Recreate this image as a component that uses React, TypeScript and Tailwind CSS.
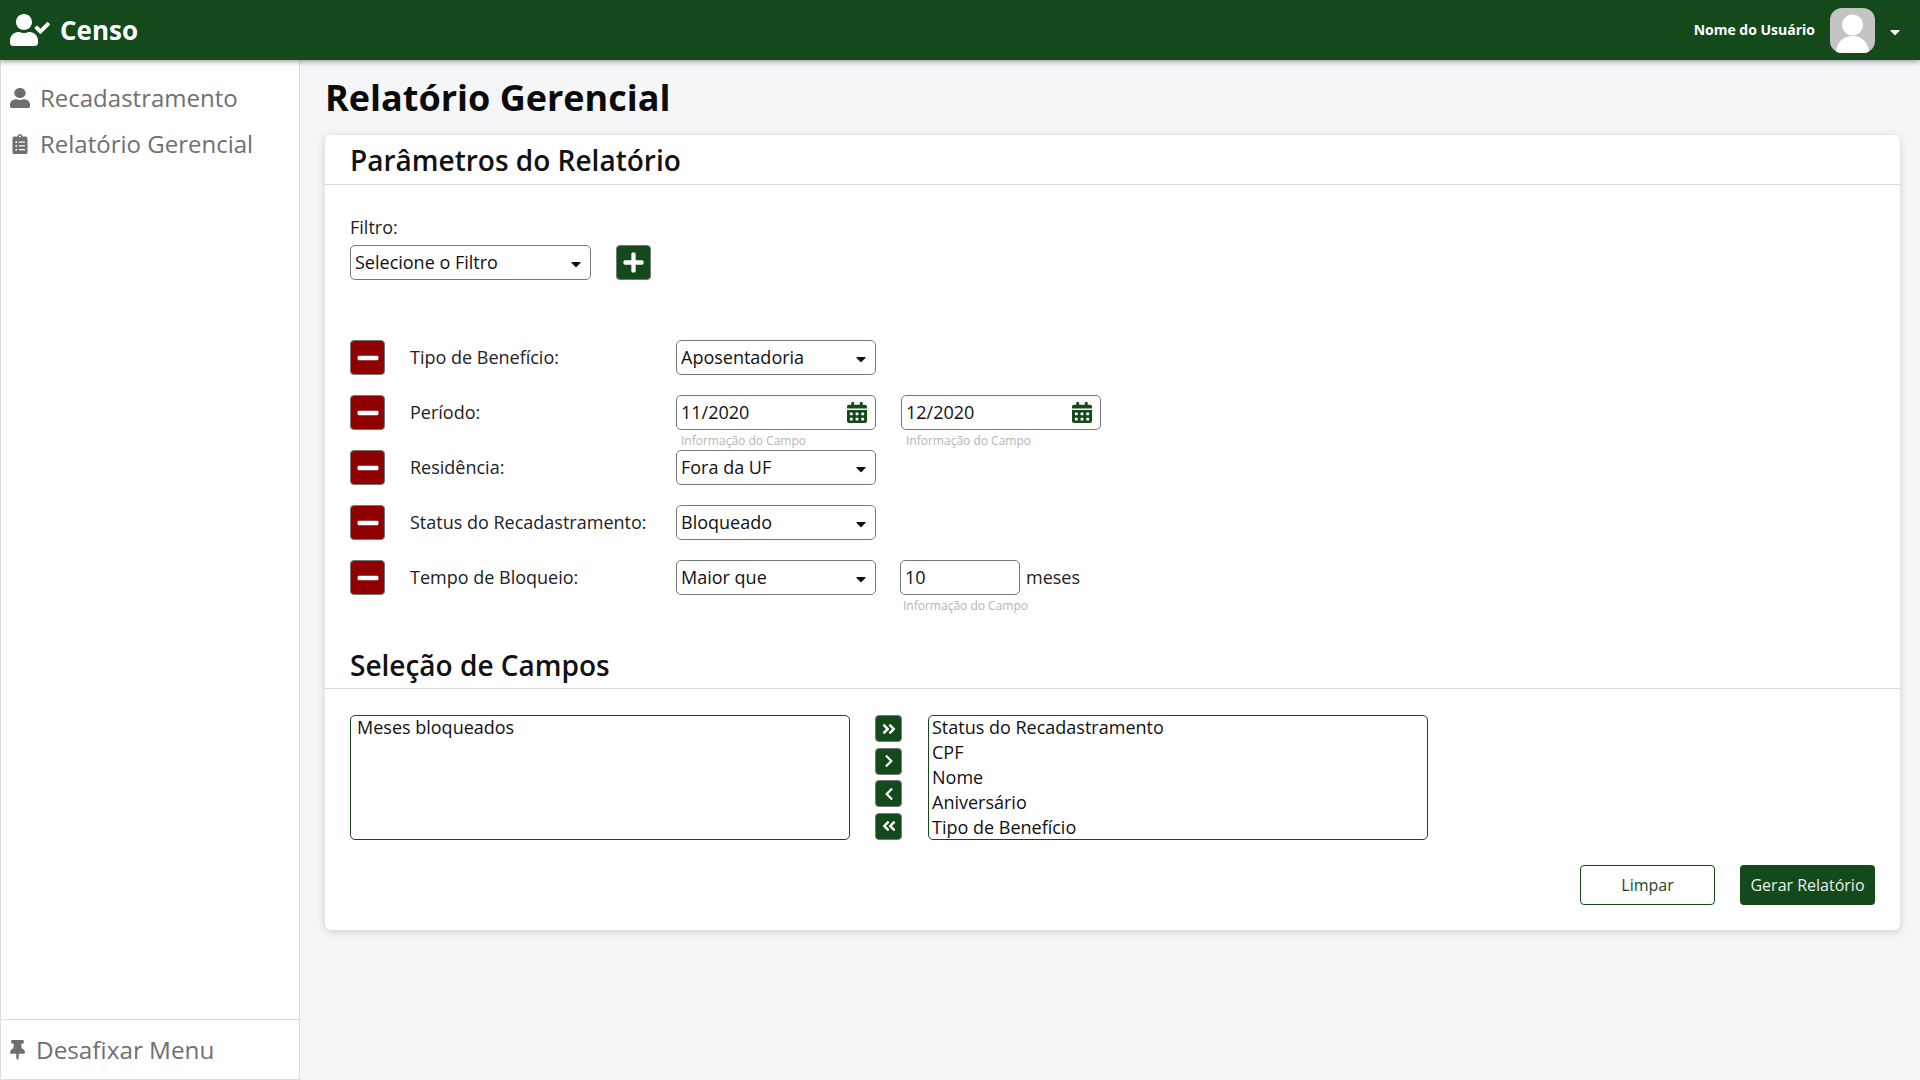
import React from 'react';
import {
  FaUserCheck,
  FaUser,
  FaClipboardList,
  FaThumbtack,
  FaCalendarAlt,
  FaPlus,
  FaMinus,
  FaAngleDoubleRight,
  FaChevronRight,
  FaChevronLeft,
  FaAngleDoubleLeft,
  FaCaretDown,
} from 'react-icons/fa';

const SelectBox: React.FC<{ value: string; className?: string }> = ({ value, className }) => (
  <div className={`flex h-[35px] items-center justify-between rounded-[5px] border border-[#777] bg-white pl-[4px] pr-[6px] text-[18px] text-[#111] ${className ?? 'w-[200px]'}`}>
    <span>{value}</span>
    <FaCaretDown className="mt-[3px] h-[16px] w-[16px] text-[#111]" />
  </div>
);

const Hint: React.FC<{ className?: string }> = ({ className }) => (
  <p className={`text-[12px] leading-[16px] text-[#b5b5b5] ${className ?? ''}`}>Informação do Campo</p>
);

const DateBox: React.FC<{ value: string }> = ({ value }) => (
  <div>
    <div className="flex h-[35px] w-[200px] items-center justify-between rounded-[5px] border border-[#777] bg-white pl-[4px] pr-[8px] text-[18px] text-[#111]">
      <span>{value}</span>
      <FaCalendarAlt preserveAspectRatio="none" className="h-[21px] w-[20px] text-[#14491c]" />
    </div>
    <Hint className="mt-[3px] pl-[5px]" />
  </div>
);

const Row: React.FC<{ label: string; children: React.ReactNode }> = ({ label, children }) => (
  <div className="flex h-[55px] items-start">
    <button className="flex h-[35px] w-[35px] items-center justify-center rounded-[4px] border border-[#777] bg-[#900000] text-white">
      <FaMinus className="h-[24px] w-[24px]" />
    </button>
    <span className="ml-[25px] w-[266px] text-[18px] leading-[35px] text-[#222]">{label}</span>
    <div className="flex items-start gap-[25px]">{children}</div>
  </div>
);

const MoveButton: React.FC<{ icon: React.ReactNode }> = ({ icon }) => (
  <button className="flex h-[27px] w-[27px] items-center justify-center rounded-[4px] border border-[#777] bg-[#14491c] text-white">
    {icon}
  </button>
);

const ListBox: React.FC<{ items: string[]; className?: string }> = ({ items, className }) => (
  <div className={`h-[125px] w-[500px] overflow-hidden rounded-[5px] border border-[#14491c] bg-white text-[18px] leading-[25px] text-[#111] ${className ?? ''}`}>
    <div className="-mt-[1px]">
      {items.map(item => (
        <div key={item}>{item}</div>
      ))}
    </div>
  </div>
);

const App: React.FC = () => {
  return (
    <div className="flex h-screen flex-col overflow-hidden bg-[#f5f6f8] font-['Open_Sans',sans-serif]">
      {/* Header */}
      <header className="z-10 flex h-[60px] shrink-0 items-center justify-between bg-[#14491c] pl-[10px] pr-[17px] shadow-[0_2px_5px_rgba(0,0,0,0.35)]">
        <div className="flex items-center gap-[10px] text-white">
          <FaUserCheck className="h-[32px] w-[40px]" />
          <span className="text-[26px] font-bold">Censo</span>
        </div>
        <div className="flex items-center">
          <span className="-mt-[1px] text-[14px] font-bold text-white">Nome do Usuário</span>
          <div className="ml-[15px] flex h-[45px] w-[45px] items-end justify-center overflow-hidden rounded-[12px] bg-[#c4c4c4]">
            <svg viewBox="0 0 45 45" className="h-[45px] w-[45px]" fill="#fff">
              <circle cx="22.5" cy="17" r="10.500" />
              <path d="M6 45c0-10 7-17 16.500-17S39 35 39 45z" />
            </svg>
          </div>
          <FaCaretDown className="ml-[12px] mt-[3px] h-[16px] w-[16px] text-white" />
        </div>
      </header>

      <div className="flex min-h-0 flex-1">
        {/* Sidebar */}
        <aside className="flex w-[300px] shrink-0 flex-col justify-between border-x border-b border-[#ddd] bg-white text-[#707070]">
          <nav className="pt-[15px]">
            <div className="flex h-[46px] items-center pl-[9px]">
              <FaUser preserveAspectRatio="none" className="h-[20px] w-[20px] text-[#6f6f6f]" />
              <span className="ml-[10px] text-[24px]">Recadastramento</span>
            </div>
            <div className="flex h-[46px] items-center pl-[9px]">
              <FaClipboardList className="h-[20px] w-[20px] text-[#6f6f6f]" />
              <span className="ml-[10px] text-[24px]">Relatório Gerencial</span>
            </div>
          </nav>
          <div className="flex h-[60px] items-center border-t border-[#ddd] pl-[8px] pt-[1px]">
            <FaThumbtack className="h-[20px] w-[17px] text-[#6f6f6f]" />
            <span className="ml-[10px] text-[24.3px]">Desafixar Menu</span>
          </div>
        </aside>

        {/* Content */}
        <main className="min-w-0 flex-1 pl-[25px] pr-[20px]">
          <h1 className="mt-[13px] text-[36px] font-bold leading-[50px] text-[#0b0b0b]">Relatório Gerencial</h1>
          <section className="mt-[12px] h-[795px] rounded-[6px] bg-white shadow-[0_2px_8px_rgba(0,0,0,0.16)]">
            <div className="h-[50px] border-b border-[#ddd] pl-[25px]">
              <h2 className="text-[28px] font-semibold leading-[50px] text-[#111]">Parâmetros do Relatório</h2>
            </div>

            <div className="pl-[25px] pt-[30px]">
              <label className="block text-[18px] leading-[25px] text-[#222]">Filtro:</label>
              <div className="mt-[5px] flex items-center gap-[25px]">
                <SelectBox value="Selecione o Filtro" className="w-[241px]" />
                <button className="flex h-[35px] w-[35px] items-center justify-center rounded-[4px] border border-[#777] bg-[#14491c] text-white">
                  <FaPlus className="h-[23px] w-[23px]" />
                </button>
              </div>

              <div className="mt-[60px]">
                <Row label="Tipo de Benefício:">
                  <SelectBox value="Aposentadoria" />
                </Row>
                <Row label="Período:">
                  <DateBox value="11/2020" />
                  <DateBox value="12/2020" />
                </Row>
                <Row label="Residência:">
                  <SelectBox value="Fora da UF" />
                </Row>
                <Row label="Status do Recadastramento:">
                  <SelectBox value="Bloqueado" />
                </Row>
                <Row label="Tempo de Bloqueio:">
                  <SelectBox value="Maior que" />
                  <div className="-ml-[1px]">
                    <div className="flex items-center">
                      <div className="flex h-[35px] w-[120px] items-center rounded-[5px] border border-[#777] bg-white pl-[4px] text-[18px] text-[#111]">10</div>
                      <span className="ml-[6px] text-[18px] text-[#222]">meses</span>
                    </div>
                    <Hint className="mt-[3px] pl-[3px]" />
                  </div>
                </Row>
              </div>
            </div>

            <div className="mt-[27px] h-[47px] border-b border-[#ddd] pl-[25px]">
              <h2 className="text-[28px] font-semibold leading-[47px] text-[#111]">Seleção de Campos</h2>
            </div>

            <div className="mt-[26px] flex items-stretch pl-[25px]">
              <ListBox items={['Meses bloqueados']} className="pl-[6px]" />
              <div className="ml-[25px] flex flex-col justify-between">
                <MoveButton icon={<FaAngleDoubleRight className="h-[16px] w-[16px]" />} />
                <MoveButton icon={<FaChevronRight className="h-[14px] w-[14px]" />} />
                <MoveButton icon={<FaChevronLeft className="h-[14px] w-[14px]" />} />
                <MoveButton icon={<FaAngleDoubleLeft className="h-[16px] w-[16px]" />} />
              </div>
              <ListBox
                items={['Status do Recadastramento', 'CPF', 'Nome', 'Aniversário', 'Tipo de Benefício']}
                className="ml-[26px] pl-[3px]"
              />
            </div>

            <div className="mt-[25px] flex justify-end gap-[25px] pr-[25px]">
              <button className="h-[40px] w-[135px] rounded-[4px] border border-[#14491c] bg-white text-[16px] text-[#14491c]">Limpar</button>
              <button className="h-[40px] w-[135px] rounded-[4px] bg-[#14491c] text-[16px] text-[#e8efe8]">Gerar Relatório</button>
            </div>
          </section>
        </main>
      </div>
    </div>
  );
};

export default App;
